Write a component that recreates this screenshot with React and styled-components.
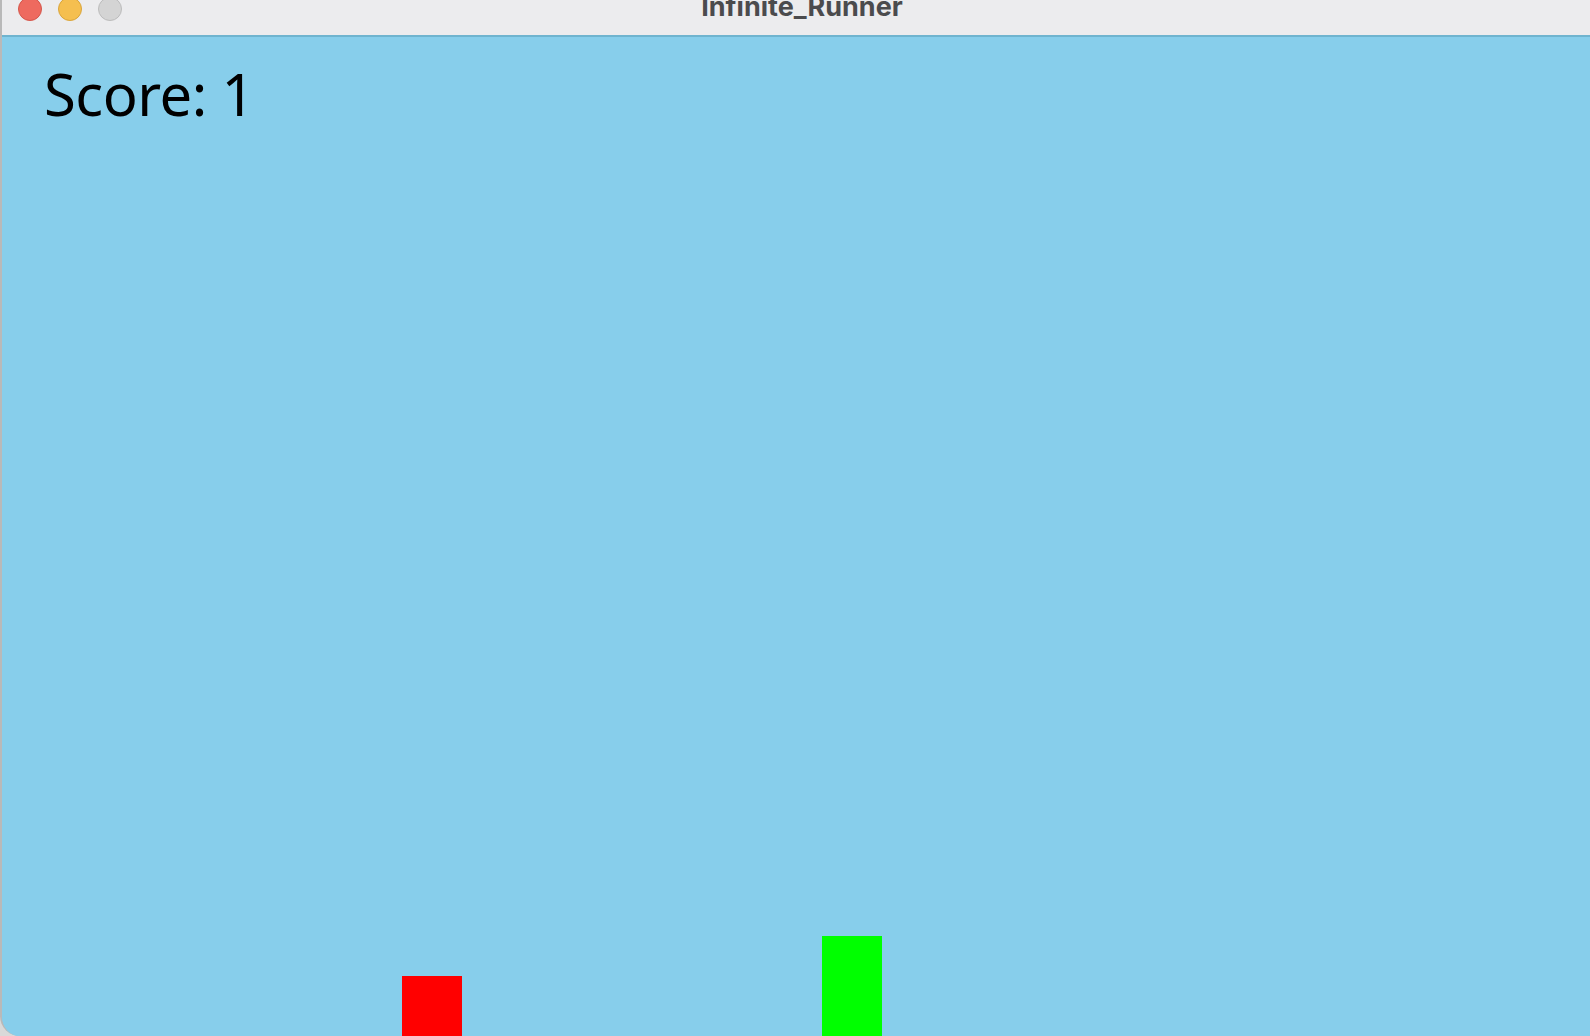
import React from "react"
import styled, { createGlobalStyle } from "styled-components"

const GlobalStyle = createGlobalStyle`
  html, body {
    margin: 0;
    padding: 0;
    background: #d9d9d9;
    overflow: hidden;
  }
`

const obstacles = [
  { id: "player", left: 400, width: 60, height: 60, color: "#ff0000" },
  { id: "pipe", left: 820, width: 60, height: 100, color: "#00ff00" },
]

export default function App() {
  return (
    <>
      <GlobalStyle />
      <Window>
        <TitleBar>
          <Lights>
            <Light color="#ee6a5f" border="#d4574c" />
            <Light color="#f5bf4f" border="#d9a53c" />
            <Light color="#d4d4d4" border="#bcbcbc" />
          </Lights>
          <Title>Infinite_Runner</Title>
        </TitleBar>

        <Canvas>
          <Score>Score: 1</Score>
          {obstacles.map((block) => (
            <Block
              key={block.id}
              $left={block.left}
              $width={block.width}
              $height={block.height}
              $color={block.color}
            />
          ))}
        </Canvas>
      </Window>
    </>
  )
}

const Window = styled.div`
  display: flex;
  flex-direction: column;
  width: 1590px;
  height: 1036px;
  box-sizing: border-box;
  border-left: 2px solid #b9b9b9;
  border-bottom-left-radius: 20px;
  overflow: hidden;
  background: #87ceeb;
`

const TitleBar = styled.div`
  display: grid;
  grid-template-columns: 1fr auto 1fr;
  align-items: start;
  height: 37px;
  flex-shrink: 0;
  background: #ececee;
  border-bottom: 2px solid #6fb4cf;
  box-sizing: border-box;
  overflow: hidden;
`

const Lights = styled.div`
  display: flex;
  gap: 16px;
  padding-left: 16px;
  margin-top: -3px;
`

const Light = styled.span`
  width: 24px;
  height: 24px;
  border-radius: 50%;
  box-sizing: border-box;
  background: ${(p) => p.color};
  border: 1px solid ${(p) => p.border};
`

const Title = styled.div`
  font-family: Inter, "Liberation Sans", sans-serif;
  font-weight: 700;
  font-size: 27px;
  line-height: 27px;
  margin: -7px 0 0 12px;
  color: #4b4b4d;
`

const Canvas = styled.div`
  position: relative;
  flex: 1;
  background: #87ceeb;
`

const Score = styled.div`
  font-family: "Noto Sans", "Open Sans", sans-serif;
  font-size: 58px;
  line-height: 1;
  letter-spacing: -0.5px;
  color: #000;
  padding: 28px 0 0 42px;
`

const Block = styled.div`
  position: absolute;
  bottom: 0;
  left: ${(p) => p.$left}px;
  width: ${(p) => p.$width}px;
  height: ${(p) => p.$height}px;
  background: ${(p) => p.$color};
`
